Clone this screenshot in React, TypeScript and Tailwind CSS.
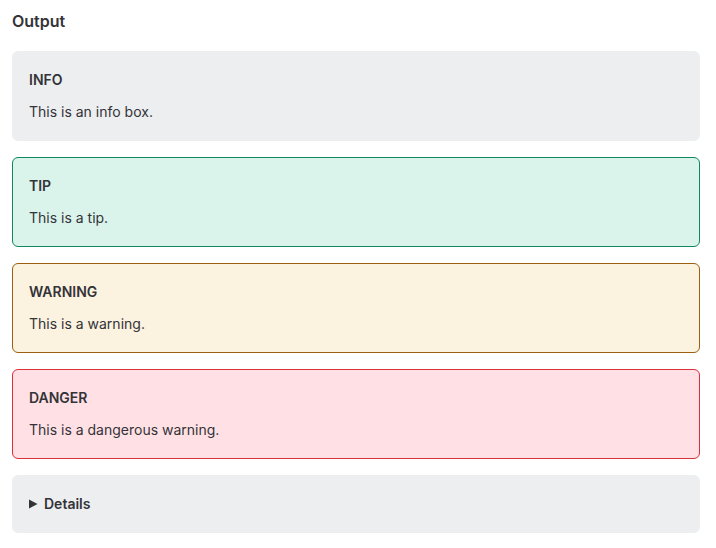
import React from 'react';

type Kind = 'info' | 'tip' | 'warning' | 'danger';

const styles: Record<Kind, string> = {
    info: 'bg-[#edeef0] border-[#edeef0]',
    tip: 'bg-[#daf4eb] border-[#12875f]',
    warning: 'bg-[#fbf2e0] border-[#9b6012]',
    danger: 'bg-[#ffe1e5] border-[#db2f3c]',
};

const Callout: React.FC<{ kind: Kind; title: string; children: React.ReactNode }> = ({ kind, title, children }) => (
    <div className={`border rounded-md px-4 py-[18px] ${styles[kind]}`}>
        <div className="text-[14px] leading-5 font-semibold text-[#333338]">{title}</div>
        <p className="mt-3 text-[14px] leading-5 text-[#333338]">{children}</p>
    </div>
);

const App: React.FC = () => {
    return (
        <div className="min-h-screen bg-white px-3 pt-[11px] font-['Inter',sans-serif]">
            <h2 className="text-[16px] leading-5 font-semibold text-[#333338] mb-5">Output</h2>

            <div className="flex flex-col gap-4 w-[688px]">
                <Callout kind="info" title="INFO">This is an info box.</Callout>
                <Callout kind="tip" title="TIP">This is a tip.</Callout>
                <Callout kind="warning" title="WARNING">This is a warning.</Callout>
                <Callout kind="danger" title="DANGER">This is a dangerous warning.</Callout>

                {/* Details */}
                <div className="bg-[#edeef0] border border-[#edeef0] rounded-md px-4 py-[18px]">
                    <div className="flex items-center gap-[6px] text-[14px] leading-5 font-semibold text-[#333338]">
                        <svg width="9" height="10" viewBox="0 0 9 10" className="fill-current">
                            <path d="M0 0.5 L8.5 5 L0 9.5 Z" />
                        </svg>
                        Details
                    </div>
                </div>
            </div>
        </div>
    );
};

export default App;
